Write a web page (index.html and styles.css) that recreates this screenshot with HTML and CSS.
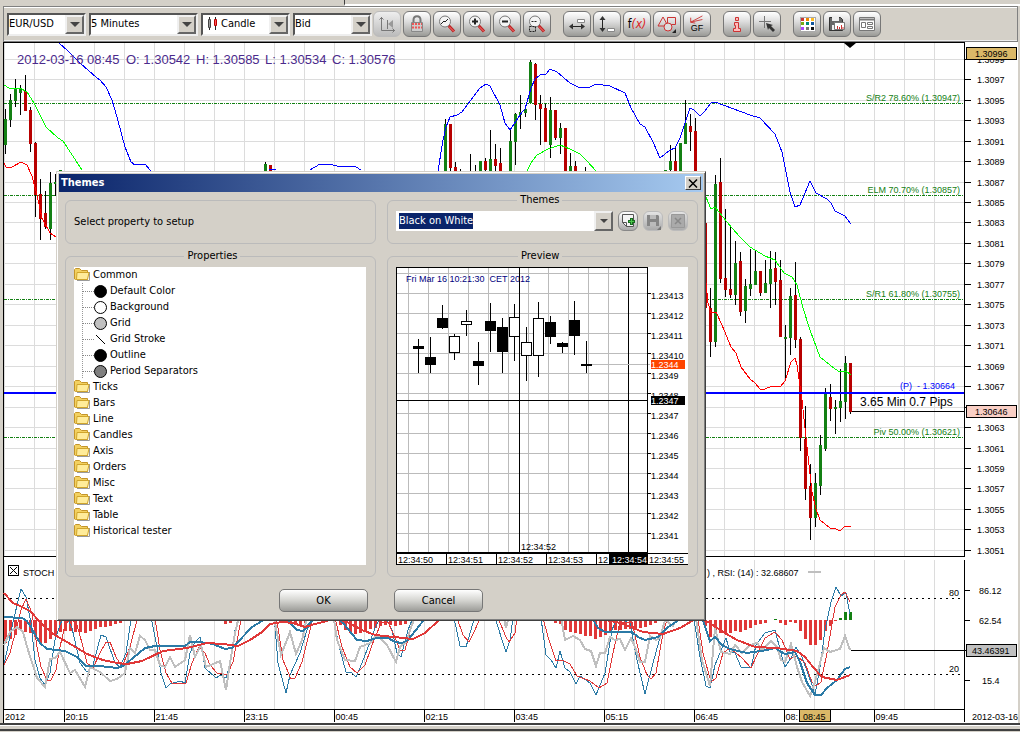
FILE: index.html
```html
<!DOCTYPE html>
<html lang="en">
<head>
    <meta charset="UTF-8">
    <meta name="viewport" content="width=device-width, initial-scale=1.0">
    <title>EUR/USD - Themes</title>
    <link rel="stylesheet" href="styles.css">
</head>
<body>
    <div class="tab-strip"></div>

    <div class="toolbar">
        <div class="combo-row">
            <label class="combo">
                <select aria-label="Instrument"><option>EUR/USD</option></select>
                <span class="arrow"></span>
            </label>
            <label class="combo wide">
                <select aria-label="Period"><option>5 Minutes</option></select>
                <span class="arrow"></span>
            </label>
            <label class="combo medium">
                <svg class="candle-icon" width="12" height="16" viewBox="0 0 12 16"><path d="M3.5 1v13M9.500 1v13" stroke="#222"/><path d="M2.500 3.500h2v8h-2z" fill="#999" stroke="#444"/><path d="M8.500 3.500h2v6h-2z" fill="#f55" stroke="#b00"/></svg>
                <select aria-label="Chart type"><option>Candle</option></select>
                <span class="arrow"></span>
            </label>
            <label class="combo">
                <select aria-label="Offer side"><option>Bid</option></select>
                <span class="arrow"></span>
            </label>
        </div>
        <div class="tools">
            <button class="tool" aria-label="Autoshift" disabled><svg viewBox="0 0 20 20"><path d="M4.500 3v13.500H18M2.500 5.500l2-2 2 2M15.500 14.500l2 2-2 2M10.500 6v9" class="ln"/><path d="M16 6v8l-5-4z" fill="#999"/></svg></button>
            <button class="tool" aria-label="Lock"><svg viewBox="0 0 20 20"><path d="M6.500 9V6c0-5 7-5 7 0v3" fill="none" stroke="#777" stroke-width="2"/><path d="M4.500 8.500h11v9h-11z" fill="#ccc" stroke="#888"/><path d="M5 10h10M5 13.500h10" stroke="#e55" stroke-width="2" stroke-dasharray="2 1"/></svg></button>
            <button class="tool" aria-label="Fit"><svg viewBox="0 0 20 20"><use href="#lens"/><path d="M4 10l3-3 1 1 3-3" class="ln dark"/></svg></button>
            <button class="tool" aria-label="Zoom in"><svg viewBox="0 0 20 20"><use href="#lens"/><path d="M5 7.500h6M8 4.500v6" class="ln dark two"/></svg></button>
            <button class="tool" aria-label="Zoom out"><svg viewBox="0 0 20 20"><use href="#lens"/><path d="M5 7.500h6" class="ln dark two"/></svg></button>
            <button class="tool" aria-label="Zoom to area"><svg viewBox="0 0 20 20"><use href="#lens"/><path d="M4.500 7.500h6M2.500 12.500h6v5h-6z" class="ln dark dots"/></svg></button>
        </div>
        <div class="tools">
            <button class="tool" aria-label="Horizontal scale"><svg viewBox="0 0 20 20"><path d="M4 12.500h12" class="ln dark"/><path d="M2 12.500l4-3v6zM18 12.500l-4-3v6z" fill="#333"/><path d="M10.500 5.500h7v3h-7z" fill="#fff" stroke="#888"/></svg></button>
            <button class="tool" aria-label="Vertical scale"><svg viewBox="0 0 20 20"><path d="M5.500 4v12" class="ln dark"/><path d="M5.500 2l3 4h-6zM5.500 18l3-4h-6z" fill="#333"/><path d="M10.500 14.500h7v3h-7z" fill="#fff" stroke="#888"/></svg></button>
            <button class="tool fx" aria-label="Indicators"><span>f<i>(x)</i></span></button>
            <button class="tool" aria-label="Shapes"><svg viewBox="0 0 20 20"><path d="M6 3l5 9H1zM10.500 3.500h8v7h-8z" class="ln red"/><circle cx="11" cy="13" r="4" fill="#ddd" stroke="#c33"/><path d="M19 15v4h-4z" fill="#222"/></svg></button>
            <button class="tool gf" aria-label="Gann and Fibonacci"><svg viewBox="0 0 20 10"><path d="M3 8L16 1M3 8l13-3M3 8V3M3 8l5 1" class="ln red"/></svg><span>GF</span></button>
        </div>
        <div class="tools">
            <button class="tool" aria-label="Info"><svg viewBox="0 0 20 20"><path d="M8.500 3.500h3v3h-3zM7.500 8.500h4v6h2v3h-7v-3h2v-3h-1z" fill="#fbb" stroke="#c33"/></svg></button>
            <button class="tool" aria-label="Cursor"><svg viewBox="0 0 20 20"><path d="M7.500 2v12M2 7.500h12" class="ln"/><path d="M9 9l7 2-2 1 4 4-2 2-4-4-1 2z" fill="#333"/></svg></button>
        </div>
        <div class="tools">
            <button class="tool" aria-label="Themes"><svg viewBox="0 0 20 20" shape-rendering="crispEdges"><path d="M3 3h15v14H3z" fill="#fff" stroke="#aaa"/><path d="M4 4h3v3H4z" fill="#c33"/><path d="M9 4h3v3H9z" fill="#e80"/><path d="M14 4h3v3h-3z" fill="#fb2"/><path d="M4 8h3v3H4z" fill="#7a1"/><path d="M9 8h3v3H9z" fill="#087"/><path d="M14 8h3v3h-3z" fill="#159"/><path d="M4 13h3v3H4z" fill="#a4f"/><path d="M9 13h3v3H9z" fill="#777"/><path d="M14 13h3v3h-3z" fill="#111"/></svg></button>
            <button class="tool" aria-label="Save chart"><svg viewBox="0 0 20 20"><path d="M2.500 3.500h11l2 2v11h-13z" fill="#666" stroke="#333"/><path d="M5 3h7v4H5zM5 11h6v5H5z" fill="#eee"/><path d="M7.500 8.500h10v7h-10z" fill="#fff" stroke="#777"/><path d="M10.500 15v-3M12.500 15v-2M14.500 15v-4M16 15v-2" stroke="#c33"/></svg></button>
            <button class="tool" aria-label="Templates"><svg viewBox="0 0 20 20"><path d="M2.500 3.500h15v13h-15z" fill="#fff" stroke="#777"/><path d="M3 5.500h14" stroke="#777" stroke-width="2"/><path d="M4.500 8.500h4v5h-4zM10.500 8.500h5v2h-5zM10.500 12.500h5v2h-5z" fill="none" stroke="#777"/></svg></button>
        </div>
    </div>

    <main class="chart-area">
        <svg id="chart" viewBox="3 42 1015 681" role="img" aria-label="EUR/USD chart"></svg>
    </main>
    <div class="bottom-bar"></div>

    <section class="dialog" role="dialog" aria-labelledby="dialogTitle">
        <header class="title-bar">
            <h1 id="dialogTitle">Themes</h1>
            <button class="close" aria-label="Close"><svg width="10" height="9" viewBox="0 0 10 9"><path d="M1 0.500l8 8M9 0.500l-8 8" stroke="#000" stroke-width="1.500"/></svg></button>
        </header>
        <div class="panels">
            <div class="group hint">Select property to setup</div>
            <fieldset class="group">
                <legend>Themes</legend>
                <div class="theme-row">
                    <input type="text" id="themeName" aria-label="Theme" value="Black on White">
                    <button class="drop" aria-label="Show themes"><span class="triangle"></span></button>
                    <button class="mini" aria-label="New theme"><svg viewBox="0 0 18 18"><path d="M3.500 2.500h11v12h-7l-4-4z" fill="#f4f4f4" stroke="#555"/><path d="M3.500 10.500h4v4" fill="none" stroke="#555"/><path d="M9 9.500h7M12.500 6v7" stroke="#186a20" stroke-width="3"/><path d="M10 9.500h5M12.500 7v5" stroke="#4cc94c"/></svg></button>
                    <button class="mini" aria-label="Save theme" disabled><svg viewBox="0 0 18 18"><path d="M3 3h11l1 1v10H3z" fill="#858585"/><path d="M6 3h6v4H6zM6 10h6v4H6z" fill="#bbb"/><path d="M17 14v4h-4z" fill="#777"/></svg></button>
                    <button class="mini" aria-label="Delete theme" disabled><svg viewBox="0 0 18 18"><path d="M2.500 2.500h13v13h-13z" fill="#aaa" stroke="#999"/><path d="M6 6l6 6M12 6l-6 6" stroke="#888" stroke-width="1.500"/></svg></button>
                </div>
            </fieldset>
            <fieldset class="group">
                <legend>Properties</legend>
                <ul class="tree">
                    <li><svg class="folder"><use href="#folder"/></svg>Common
                        <ul>
                            <li><span class="dot black"></span>Default Color</li>
                            <li><span class="dot"></span>Background</li>
                            <li><span class="dot silver"></span>Grid</li>
                            <li><svg class="stroke" viewBox="0 0 13 13"><path d="M1 1l11 11" stroke="#000"/></svg>Grid Stroke</li>
                            <li><span class="dot black"></span>Outline</li>
                            <li><span class="dot gray"></span>Period Separators</li>
                        </ul>
                    </li>
                    <li><svg class="folder"><use href="#folder"/></svg>Ticks</li>
                    <li><svg class="folder"><use href="#folder"/></svg>Bars</li>
                    <li><svg class="folder"><use href="#folder"/></svg>Line</li>
                    <li><svg class="folder"><use href="#folder"/></svg>Candles</li>
                    <li><svg class="folder"><use href="#folder"/></svg>Axis</li>
                    <li><svg class="folder"><use href="#folder"/></svg>Orders</li>
                    <li><svg class="folder"><use href="#folder"/></svg>Misc</li>
                    <li><svg class="folder"><use href="#folder"/></svg>Text</li>
                    <li><svg class="folder"><use href="#folder"/></svg>Table</li>
                    <li><svg class="folder"><use href="#folder"/></svg>Historical tester</li>
                </ul>
            </fieldset>
            <fieldset class="group">
                <legend>Preview</legend>
                <svg id="preview" viewBox="396 267 292 298" role="img" aria-label="Theme preview"></svg>
            </fieldset>
        </div>
        <footer class="actions">
            <button class="action">OK</button>
            <button class="action">Cancel</button>
        </footer>
    </section>

    <svg class="symbols" aria-hidden="true">
        <symbol id="lens" viewBox="0 0 20 20">
            <path d="M11.500 11.500l5.500 6" stroke="#b22" stroke-width="3"/>
            <path d="M12 12.500l5 5" stroke="#f77"/>
            <circle cx="8" cy="7.500" r="5.500" fill="#f4f4f4" stroke="#777"/>
        </symbol>
        <symbol id="folder" viewBox="0 0 16 14">
            <path d="M3 13.500h12.500V5" fill="none" stroke="#999"/>
            <path d="M.5 12V2.500l1-1h4l2 2h6v9h-12z" fill="#f3d160" stroke="#c4952a"/>
            <path d="M3 5.500h12l-1.500 7h-11z" fill="#ffec9a" stroke="#d0a52c"/>
        </symbol>
    </svg>

    <script src="chart.js"></script>
</body>
</html>
```
FILE: styles.css
```css
:root {
    --face: #d4d0c8;
    --shadow: #808080;
    --dark: #404040;
    --title-from: #0a246a;
    --title-to: #a6caf0;
    --ui-font: "DejaVu Sans Condensed", "Open Sans", sans-serif;
    --axis-font: "Liberation Sans", Arial, sans-serif;
}

* {
    box-sizing: border-box;
}

body {
    margin: 0;
    background: var(--face);
    color: #000;
    font: 11px/16px var(--ui-font);
    position: relative;
}

button,
input,
select {
    font: inherit;
    color: inherit;
    margin: 0;
}

.symbols {
    position: absolute;
    width: 0;
    height: 0;
}

.tab-strip {
    height: 6px;
    margin-left: 344px;
    border-left: 1px solid var(--dark);
    border-bottom: 2px solid #fff;
}

/* toolbar */
.toolbar {
    display: flex;
    align-items: center;
    gap: 12px;
    height: 36px;
    margin: 0 2px 0 3px;
    padding: 0 3px;
    border: 1px solid var(--shadow);
    box-shadow: inset 0 1px #fff, inset 0 -1px #eee;
}

.combo-row {
    display: flex;
    gap: 3px;
    margin-right: -11px;
}

.combo {
    display: flex;
    width: 79px;
    height: 23px;
    background: #fff;
    border: 2px solid;
    border-color: #555 #eee #eee #555;
}

.combo.wide {
    width: 109px;
}

.combo.medium {
    width: 89px;
}

.combo select {
    appearance: none;
    flex: 1;
    min-width: 0;
    padding: 0;
    border: 0;
    background: none;
    outline: 0;
}

.candle-icon {
    margin: 1px 3px 0;
}

.arrow,
.drop {
    display: flex;
    align-items: center;
    justify-content: center;
    width: 19px;
    padding: 0;
    background: var(--face);
    border: 2px solid;
    border-color: #f0f0f0 #666 #666 #f0f0f0;
}

.arrow::after {
    content: "";
    border: 5px solid transparent;
    border-top-color: #444;
    border-bottom: 0;
}

.tools {
    display: flex;
    gap: 2px;
}

.tool {
    width: 28px;
    height: 26px;
    padding: 0;
    display: flex;
    align-items: center;
    justify-content: center;
    border: 1px solid #777;
    border-radius: 6px;
    background: linear-gradient(#fff, #ddd 40%, #9a9a96);
}

.tool:disabled {
    border-color: #bbb;
    background: linear-gradient(#eee, #bbb);
}

.tool svg {
    width: 20px;
    height: 20px;
}

.ln {
    fill: none;
    stroke: #777;
}

.ln.dark {
    stroke: #222;
}

.ln.two {
    stroke-width: 2;
}

.ln.dots {
    stroke-dasharray: 2 1;
}

.ln.red {
    stroke: #c33;
}

.fx {
    font-size: 12px;
}

.fx i {
    color: #d22;
}

.tool.gf {
    flex-direction: column;
    font: 9px/9px "Liberation Sans", sans-serif;
}

.gf svg {
    height: 9px;
}

/* chart */
.chart-area {
    margin-right: 2px;
    margin-left: 3px;
    background: #fff;
}

.chart-area svg,
#preview {
    display: block;
    width: 100%;
}

.bottom-bar {
    height: 8px;
    border-top: 2px solid var(--dark);
    border-bottom: 2px solid var(--dark);
    box-shadow: inset 0 1px #fff;
}

svg text {
    font: 9px var(--axis-font);
    white-space: pre;
}

svg text.info {
    font-size: 13px;
}

svg text.pips {
    font-size: 12px;
}

.grid {
    stroke: #dcdcdc;
    shape-rendering: crispEdges;
}

.preview-grid {
    stroke: #bbb;
    shape-rendering: crispEdges;
}

.axis {
    stroke: #000;
    shape-rendering: crispEdges;
}

.series {
    fill: none;
    shape-rendering: crispEdges;
}

/* themes dialog */
.dialog {
    position: absolute;
    left: 56px;
    top: 171px;
    width: 650px;
    padding: 2px;
    background: var(--face);
    border: 1px solid;
    border-color: var(--face) var(--dark) var(--dark) var(--face);
    box-shadow: inset 1px 1px #fff, inset -1px -1px var(--shadow);
}

.title-bar {
    display: flex;
    align-items: center;
    justify-content: space-between;
    height: 18px;
    padding: 0 2px;
    background: linear-gradient(to right, var(--title-from), var(--title-to));
}

.title-bar h1 {
    margin: 0;
    color: #fff;
    font-size: 11px;
}

.close {
    display: flex;
    align-items: center;
    justify-content: center;
    width: 16px;
    height: 14px;
    padding: 0;
    background: var(--face);
    border: 1px solid;
    border-color: #fff var(--dark) var(--dark) #fff;
}

.panels {
    display: grid;
    grid-template-columns: 1fr 1fr;
    gap: 4px 11px;
    padding: 0 5px 0 6px;
}

.group {
    margin: 0;
    min-width: 0;
    padding: 3px 9px 11px 8px;
    border: 1px solid #bbb;
    border-radius: 6px;
}

.hint {
    margin-top: 8px;
    height: 44px;
    padding-top: 0;
    line-height: 42px;
}

legend {
    margin: 0 43% 0 auto;
    padding: 0 3px;
}

.theme-row {
    display: flex;
    height: 20px;
}

.theme-row input {
    flex: 1;
    min-width: 0;
    padding: 0 3px;
    border: 0;
    outline: 0;
    background: #fff;
}

.theme-row input::selection {
    background: var(--title-from);
    color: #fff;
}

.drop {
    margin-right: 5px;
}

.triangle {
    border: 4px solid transparent;
    border-top-color: #444;
    border-bottom: 0;
}

.mini {
    width: 20px;
    height: 20px;
    padding: 0;
    border: 1px solid #888;
    border-radius: 6px;
    background: linear-gradient(#fff, #aaa);
}

.mini + .mini {
    margin-left: 5px;
}

.mini:disabled {
    border-color: #bbb;
    background: linear-gradient(#e4e4e4, #aaa);
}

.mini svg {
    display: block;
    width: 18px;
    height: 18px;
}

.tree {
    height: 298px;
    background: #fff;
}

.tree,
.tree ul {
    margin: 0;
    padding: 0;
    list-style: none;
}

.tree li {
    line-height: 16px;
}

.folder {
    width: 16px;
    height: 14px;
    margin: 0 3px 2px 0;
    vertical-align: middle;
}

.tree ul {
    margin-left: 8px;
    background: linear-gradient(to bottom, #999 50%, transparent 50%) 0 0 / 1px 2px repeat-y;
}

.tree ul li {
    display: flex;
    align-items: center;
    gap: 3px;
    height: 16px;
}

.tree ul li::before {
    content: "";
    width: 12px;
    border-top: 1px dotted #888;
}

.dot,
.stroke {
    width: 13px;
    height: 13px;
    margin-left: -3px;
    border-radius: 50%;
}

.dot {
    border: 1px solid #000;
}

.dot.black {
    background: #000;
}

.dot.silver {
    background: #c0c0c0;
}

.dot.gray {
    background: #808080;
}

.actions {
    display: flex;
    justify-content: center;
    gap: 26px;
    padding: 12px 0 6px;
}

.action {
    width: 89px;
    height: 23px;
    border: 1px solid #777;
    border-radius: 5px;
    background: linear-gradient(#fff, #d4d4d0 50%, #9c9c98);
}
```
FILE: chart.js
```javascript
const NS = 'http://www.w3.org/2000/svg';
const chart = document.getElementById('chart');
const preview = document.getElementById('preview');

const GREEN = '#138013';
const RED = '#b80000';
const BLUE_LINE = '#2b7aa6';
const RED_LINE = '#e03838';

function add(parent, tag, attrs, text) {
    const el = document.createElementNS(NS, tag);
    for (const key in attrs) el.setAttribute(key, attrs[key]);
    if (text !== undefined) el.textContent = text;
    parent.appendChild(el);
    return el;
}

function line(parent, x1, y1, x2, y2, cls, extra) {
    return add(parent, 'line', Object.assign({ x1, y1, x2, y2, class: cls }, extra));
}

function label(parent, x, y, text, extra) {
    return add(parent, 'text', Object.assign({ x, y }, extra), text);
}

function rect(parent, x, y, width, height, fill, stroke) {
    return add(parent, 'rect', { x, y, width, height, fill, stroke: stroke || 'none', 'shape-rendering': 'crispEdges' });
}

function series(points, color, width) {
    add(chart, 'polyline', { points, stroke: color, 'stroke-width': width || 1, class: 'series' });
}

// x, high, body top, body bottom, low, up
const candles = [
    [5,109,119,145,154,1],[10,94,100,120,127,1],[15,79,89,101,107,1],[20,85,89,93,115,1],[25,75,91,111,111,0],
    [30,107,110,144,152,0],[35,142,143,195,217,0],[40,179,194,219,240,0],[45,191,213,227,229,0],[50,172,183,229,240,1],
    [55,174,182,184,196,1],[60,170,170,175,175,1],[265,162,164,175,175,1],[270,165,165,175,175,0],
    [445,119,124,175,175,1],[450,124,124,168,175,0],[455,162,167,175,175,0],[460,169,170,170,175,0],[470,154,170,170,175,0],
    [475,165,170,170,175,0],[480,161,161,175,175,1],[485,158,161,170,175,0],[490,130,159,171,175,1],[495,144,159,166,175,0],
    [500,148,163,175,175,0],[510,128,141,175,175,1],[515,113,114,142,165,1],[520,95,112,115,129,1],[525,107,109,113,117,1],
    [530,60,62,103,103,1],[535,63,64,105,120,0],[540,95,104,109,145,0],[545,104,108,142,142,0],[550,97,110,145,158,1],
    [555,110,110,138,140,0],[560,123,128,138,154,1],[565,128,128,175,175,0],[570,153,166,175,175,1],[575,161,166,175,175,0],
    [585,167,171,171,175,0],[665,170,170,175,175,1],[670,145,161,170,175,1],[675,148,161,175,175,0],[680,143,143,175,175,1],
    [685,100,123,144,144,1],[690,114,126,132,151,0],[695,118,131,175,175,0],[705,223,223,308,308,0],[710,288,308,342,357,0],
    [715,175,184,342,347,1],[720,158,182,279,283,0],[725,209,278,290,297,0],[730,225,289,295,298,0],[735,241,263,295,305,1],
    [740,252,261,312,316,0],[745,279,286,311,323,1],[750,249,284,289,296,1],[755,250,271,285,285,1],[760,271,271,293,296,0],
    [765,260,283,293,293,1],[770,251,269,284,308,1],[775,252,268,282,305,0],[780,260,280,337,337,0],[785,325,337,339,379,1],
    [790,288,296,338,355,1],[795,262,295,340,348,0],[800,337,339,438,451,0],[805,406,439,489,500,0],[810,464,486,518,540,0],
    [815,473,483,518,527,1],[820,435,445,486,495,1],[825,388,393,449,451,1],[830,384,397,409,421,0],[835,400,407,409,434,1],
    [840,369,401,408,422,1],[845,356,363,402,419,1],[850,363,363,412,414,0]
];

function drawPriceChart() {
    rect(chart, 3, 42, 1015, 681, '#fff');
    for (let x = 4.5; x < 960; x += 30) {
        line(chart, x, 43, x, 556, 'grid');
        line(chart, x, 560, x, 709, 'grid');
    }
    for (let i = 0; i < 25; i++) {
        const y = Math.floor(59.3 + i * 20.46) + 0.5;
        line(chart, 4, y, 964, y, 'grid');
        line(chart, 965, y, 971, y, 'axis');
        label(chart, 977, y + 3, '1.' + (3099 - i * 2));
    }
    for (const y of [103.5, 195.5, 299.5, 437.5]) {
        line(chart, 4, y, 964, y, '', { stroke: '#138013', 'stroke-dasharray': '3 1 1 1', 'shape-rendering': 'crispEdges' });
    }

    for (const [x, high, top, bottom, low, up] of candles) {
        line(chart, x + 0.5, high, x + 0.5, low, 'axis');
        if (bottom > top) rect(chart, x - 1, top, 3, bottom - top, up ? GREEN : RED);
    }

    series('59,43 68,51 80,63 97,78 100,80 106,87 112,100 117,117 125,147 131,162 135,165 145,164 150,170 154,176', '#00f');
    series('269,169 276,170', '#00f');
    series('310,170 320,164 325,165 330,164 340,167 347,166 356,167 361,170', '#00f');
    series('438,171 443,140 446,127 450,117 457,115 462,112 480,88 486,84 490,86 500,105 505,123 510,130 522,112 525,109 531,88 535,79 540,75 546,74 550,69 557,72 570,83 578,87 590,87 596,84 610,86 625,93 631,108 640,124 645,127 653,142 660,158 670,150 675,148 680,138 686,120 690,108 694,110 700,116 705,111 711,103 715,102 750,115 760,118 775,134 782,152 790,192 795,207 800,205 805,193 810,181 816,193 827,199 831,203 835,211 845,216 851,224', '#00f');
    series('4,85 9,88 20,88 27,92 34,103 46,127 58,138 63,141 82,170', '#0f0');
    series('527,171 531,163 537,155 548,149 560,145 570,149 580,154 587,161 596,171', '#0f0');
    series('706,197 711,209 715,207 723,217 732,228 740,237 750,247 765,256 775,260 784,273 792,277 797,285 803,308 810,330 820,357 835,369 840,372 846,371 851,375', '#0f0');
    series('4,163 6,167 12,167 21,162 27,165 32,176 37,195 42,218 50,233 56,237', '#f00');
    series('706,283 708,303 711,313 716,312 722,325 731,347 736,353 741,367 750,379 755,383 760,389 765,389 772,386 780,387 785,381 791,362 795,358 797,365 802,400 807,447 812,492 816,509 820,520 830,528 836,529 840,531 845,526 851,526', '#f00');

    rect(chart, 4, 392, 960, 2, '#00f');
    line(chart, 852, 411.5, 964, 411.5, 'axis');
    line(chart, 3, 42.5, 965, 42.5, 'axis');
    line(chart, 3.5, 42, 3.5, 723, 'axis');
    line(chart, 964.5, 42, 964.5, 556, 'axis');
    line(chart, 3, 556.5, 965, 556.5, 'axis');
    add(chart, 'path', { d: 'M844 43h12l-6 5z' });

    const end = { fill: GREEN, 'text-anchor': 'end' };
    label(chart, 960, 101, 'S/R2 78.60% (1.30947)', end);
    label(chart, 960, 193, 'ELM 70.70% (1.30857)', end);
    label(chart, 960, 297, 'S/R1 61.80% (1.30755)', end);
    label(chart, 960, 435, 'Piv 50.00% (1.30621)', end);
    label(chart, 955, 389, '(P)  - 1.30664', { fill: '#00f', 'text-anchor': 'end' });
    label(chart, 860, 406, '3.65 Min 0.7 Pips', { class: 'pips' });

    const info = { class: 'info', fill: '#4b2a8c' };
    label(chart, 17, 64, '2012-03-16', info);
    label(chart, 87, 64, '08:45', info);
    label(chart, 126, 64, 'O: 1.30542', info);
    label(chart, 196, 64, 'H: 1.30585', info);
    label(chart, 265, 64, 'L: 1.30534', info);
    label(chart, 332, 64, 'C: 1.30576', info);

    rect(chart, 966.5, 47.5, 50, 12, '#dab868', '#000');
    label(chart, 975, 57, '1.30996');
    rect(chart, 966.5, 405.5, 50, 12, '#f9cfc5', '#000');
    label(chart, 975, 415, '1.30646');
}

// x: y of the bar's free end, base line is 620
const bars = {
    5:643,10:639,15:635,20:630,25:632,30:633,35:637,40:643,45:643,50:639,55:635,60:632,65:631,70:631,75:632,80:632,85:633,
    90:631,95:629,100:627,105:627,110:626,115:624,120:623,225:624,230:623,275:622,280:623,285:623,290:624,295:625,300:625,
    305:623,340:625,345:630,350:633,355:634,360:633,365:631,370:629,375:628,380:626,385:625,390:625,395:626,400:625,405:624,
    555:623,560:624,565:630,570:632,575:633,580:634,585:636,590:636,595:639,600:637,605:635,610:632,615:630,620:630,625:629,
    630:629,635:628,640:628,645:627,650:625,655:623,705:626,710:637,715:632,720:633,725:634,730:633,735:631,740:632,745:630,
    750:628,755:625,760:624,765:623,775:619,780:623,785:625,790:622,795:623,800:631,805:639,810:645,815:645,820:640,825:631,
    830:626,835:621,840:618,845:612,850:612
};

function drawIndicators() {
    for (const y of [598.5, 674.5]) {
        line(chart, 4, y, 964, y, 'axis', { 'stroke-dasharray': '2 4' });
    }
    for (const x in bars) {
        const y = bars[x];
        rect(chart, x - 1, Math.min(620, y), 3, Math.abs(y - 620), y < 620 ? GREEN : RED_LINE);
    }

    series('4,665 13,622 21,589 26,597 31,623 35,660 40,678 45,685 50,673 55,640 60,625 65,613 72,628 80,663 87,672 93,665 101,635 106,637 115,663 120,667 126,653 131,620 140,600 151,617 157,647 161,673 166,688 170,684 180,681 185,683 190,653 195,642 200,637 205,668 216,678 221,675 226,678 230,665 235,630 240,617 274,615 278,663 286,693 290,675 300,653 307,630 312,618 333,618 340,650 346,672 351,672 356,677 362,663 367,650 375,628 380,618 386,618 392,630 397,653 401,657 408,630 412,620 450,590 454,618 460,646 466,647 473,623 480,590 495,618 506,652 510,640 513,618 530,590 541,618 546,655 551,660 556,668 560,651 565,668 570,672 576,684 580,676 590,683 596,695 605,673 612,630 617,618 630,623 637,660 645,694 653,663 662,630 668,613 693,613 700,657 706,686 710,688 715,665 726,638 730,652 735,653 741,667 751,668 756,645 765,633 775,630 781,653 785,667 791,658 796,647 802,657 812,685 815,695 820,667 825,630 831,602 836,587 841,596 846,593 850,614', BLUE_LINE);
    series('4,665 10,653 16,630 21,610 26,599 32,613 37,647 41,667 47,680 51,680 56,670 60,647 65,625 71,618 77,625 82,643 87,663 93,668 100,653 106,642 110,642 116,657 122,667 130,647 137,620 145,603 155,618 160,650 166,673 172,683 186,683 192,663 199,647 205,653 210,665 217,673 227,675 233,662 241,620 276,615 283,660 291,679 295,678 302,662 310,630 313,618 335,618 342,647 350,667 357,673 365,665 375,637 382,622 388,622 393,633 400,650 405,650 412,625 420,600 457,618 463,635 469,642 475,630 480,618 498,618 506,637 509,642 515,633 517,618 543,618 548,637 556,661 562,660 570,664 577,676 590,681 599,688 607,683 613,653 620,622 632,622 640,657 647,675 651,679 656,673 663,633 669,613 697,613 703,653 711,682 716,678 723,653 730,648 742,658 751,668 757,655 765,638 775,632 782,640 790,659 797,656 805,663 812,682 816,686 821,682 827,653 835,607 841,595 845,592 850,602', RED_LINE);
    series('4,645 10,632 17,627 23,632 28,650 37,678 45,687 50,659 55,658 60,652 70,673 75,670 85,687 90,667 100,672 110,681 117,679 125,673 130,648 135,653 140,636 145,640 150,650 155,650 160,665 165,667 170,657 175,667 185,660 190,635 195,657 201,645 206,667 220,661 226,690 230,663 235,633 240,612 273,612 281,655 290,632 296,654 302,640 308,612 333,612 337,640 345,660 355,661 360,647 370,643 377,635 387,645 396,662 400,647 406,642 413,622 420,600 500,600 506,628 510,612 560,612 565,640 573,636 580,640 585,649 591,651 596,666 600,653 605,653 610,637 615,640 620,639 625,650 631,638 635,647 640,662 645,662 650,636 656,640 660,638 665,620 673,626 680,612 695,612 702,660 710,686 715,628 721,652 730,654 735,645 742,653 750,645 757,643 762,650 771,641 777,647 781,660 785,662 791,644 797,667 802,682 810,696 815,682 820,663 824,648 830,652 840,649 845,636 850,650', '#bfbfbf', 2);
    series('4,617 22,618 27,621 32,629 40,643 47,649 65,651 77,657 86,666 100,666 117,668 123,666 133,658 145,648 155,646 185,646 190,642 200,642 213,644 225,649 232,648 237,643 252,627 262,621 268,612 280,612 290,623 297,630 303,631 312,621 318,612 333,612 343,623 357,640 367,641 377,638 388,638 395,642 402,643 408,640 423,621 430,612 585,612 592,618 598,628 605,632 632,632 638,637 645,640 658,637 667,628 677,621 685,612 700,612 710,641 715,637 722,645 730,649 738,651 747,653 767,650 775,648 785,654 795,652 800,662 807,683 815,695 821,695 827,688 837,680 845,669 850,667', BLUE_LINE, 2);
    series('4,593 13,603 20,606 30,611 40,622 53,634 67,642 87,654 103,660 117,663 127,664 142,661 163,651 187,648 207,643 223,644 238,646 250,640 262,632 270,624 282,622 293,623 305,627 315,624 327,621 333,618 347,622 362,630 375,635 413,639 425,633 438,621 445,612 590,612 597,618 620,623 633,628 643,632 663,634 680,628 692,621 700,618 710,623 723,632 737,640 755,647 777,648 797,651 805,657 813,667 822,677 837,680 850,675', RED_LINE, 2);

    line(chart, 851, 650.5, 964, 650.5, 'axis');
    line(chart, 964.5, 560, 964.5, 722, 'axis');
    line(chart, 3, 709.5, 965, 709.5, 'axis');
    for (const y of [590.5, 620.5, 650.5, 680.5]) line(chart, 965, y, 970, y, 'axis');

    label(chart, 949, 596, '80');
    label(chart, 949, 672, '20');
    label(chart, 979, 594, '86.12');
    label(chart, 979, 624, '62.54');
    label(chart, 982, 684, '15.4');
    rect(chart, 966.5, 644.5, 50, 12, '#c0c0c0', '#000');
    label(chart, 972, 654, '43.46391');

    rect(chart, 8.5, 565.5, 10, 10, '#fff', '#000');
    add(chart, 'path', { d: 'M10 567l7 7M17 567l-7 7', stroke: '#000' });
    label(chart, 23, 576, 'STOCH');
    label(chart, 707, 576, ') , RSI: (14) : 32.68607');
    rect(chart, 808, 571, 13, 2, '#bfbfbf');
}

function drawTimeAxis() {
    const times = ['20:15', '21:45', '23:15', '00:45', '02:15', '03:45', '05:15', '06:45', '08:', '09:45'];
    label(chart, 5, 720, '2012');
    times.forEach((time, i) => {
        const x = 64.5 + i * 90;
        line(chart, x, 709, x, 722, 'axis');
        label(chart, x + 1, 720, time);
    });
    rect(chart, 799.5, 709.5, 31, 12, '#dab868', '#000');
    label(chart, 803, 720, '08:45');
    label(chart, 972, 720, '2012-03-16');
}

const previewCandles = [
    [418,339,346,349,373,1],[430,337,357,365,373,1],[442,305,318,328,329,1],[454,334,336,353,360,0],[466,310,321,325,336,0],
    [478,342,361,366,385,1],[490,303,321,331,352,1],[502,318,327,352,373,1],[514,304,317,337,361,0],[526,327,342,356,381,0],
    [538,302,318,356,377,0],[550,316,322,337,344,1],[562,342,343,347,353,1],[574,301,320,336,355,1],[586,341,364,366,373,1]
];

function drawPreview() {
    rect(preview, 396, 267, 292, 298, '#fff');
    for (let x = 408.5; x < 620; x += 20) line(preview, x, 268, x, 552, 'preview-grid');
    const prices = ['', '1.23413', '1.23412', '1.23411', '1.23410', '1.2349', '1.2348', '1.2347', '1.2346', '1.2345', '1.2344', '1.2343', '1.2342', '1.2341'];
    prices.forEach((price, i) => {
        const y = 273.5 + i * 20;
        line(preview, 397, y, 647, y, 'preview-grid');
        if (price) {
            line(preview, 648, y, 651, y, 'axis');
            label(preview, 651, y + 5, price);
        }
    });
    label(preview, 406, 282, 'Fri Mar 16 10:21:30  CET 2012', { fill: '#000080' });
    line(preview, 519.5, 267, 519.5, 552, 'axis');
    line(preview, 628.5, 267, 628.5, 552, 'axis');
    line(preview, 397, 400.5, 647, 400.5, 'axis');
    line(preview, 586, 364.5, 650, 364.5, 'preview-grid');
    for (const [x, high, top, bottom, low, filled] of previewCandles) {
        line(preview, x + 0.5, high, x + 0.5, low, 'axis');
        rect(preview, x - 4.5, top + 0.5, 10, bottom - top - 1, filled ? '#000' : '#fff', '#000');
    }
    line(preview, 396, 267.5, 648, 267.5, 'axis');
    line(preview, 396.5, 267, 396.5, 565, 'axis');
    line(preview, 647.5, 267, 647.5, 553, 'axis');
    rect(preview, 396, 552, 252, 2, '#000');
    line(preview, 648, 553.5, 688, 553.5, 'axis');
    line(preview, 396, 564.5, 688, 564.5, 'axis');

    rect(preview, 651, 360, 34, 9, '#ff4500');
    label(preview, 651, 368, '1.2344', { fill: '#fff' });
    rect(preview, 651, 396, 34, 9, '#000');
    label(preview, 651, 404, '1.2347', { fill: '#fff' });

    label(preview, 521, 550, '12:34:52');
    [0, 1, 2, 3, 4].forEach(i => {
        if (i) line(preview, 396.5 + i * 50, 553, 396.5 + i * 50, 565, 'axis');
        label(preview, 398 + i * 50, 563, i < 4 ? '12:34:5' + i : '12');
    });
    rect(preview, 609, 554, 39, 10, '#000');
    label(preview, 612, 563, '12:34:54', { fill: '#fff' });
    label(preview, 649, 563, '12:34:55');
}

drawPriceChart();
drawIndicators();
drawTimeAxis();
drawPreview();

document.getElementById('themeName').focus();
document.getElementById('themeName').select();
```
